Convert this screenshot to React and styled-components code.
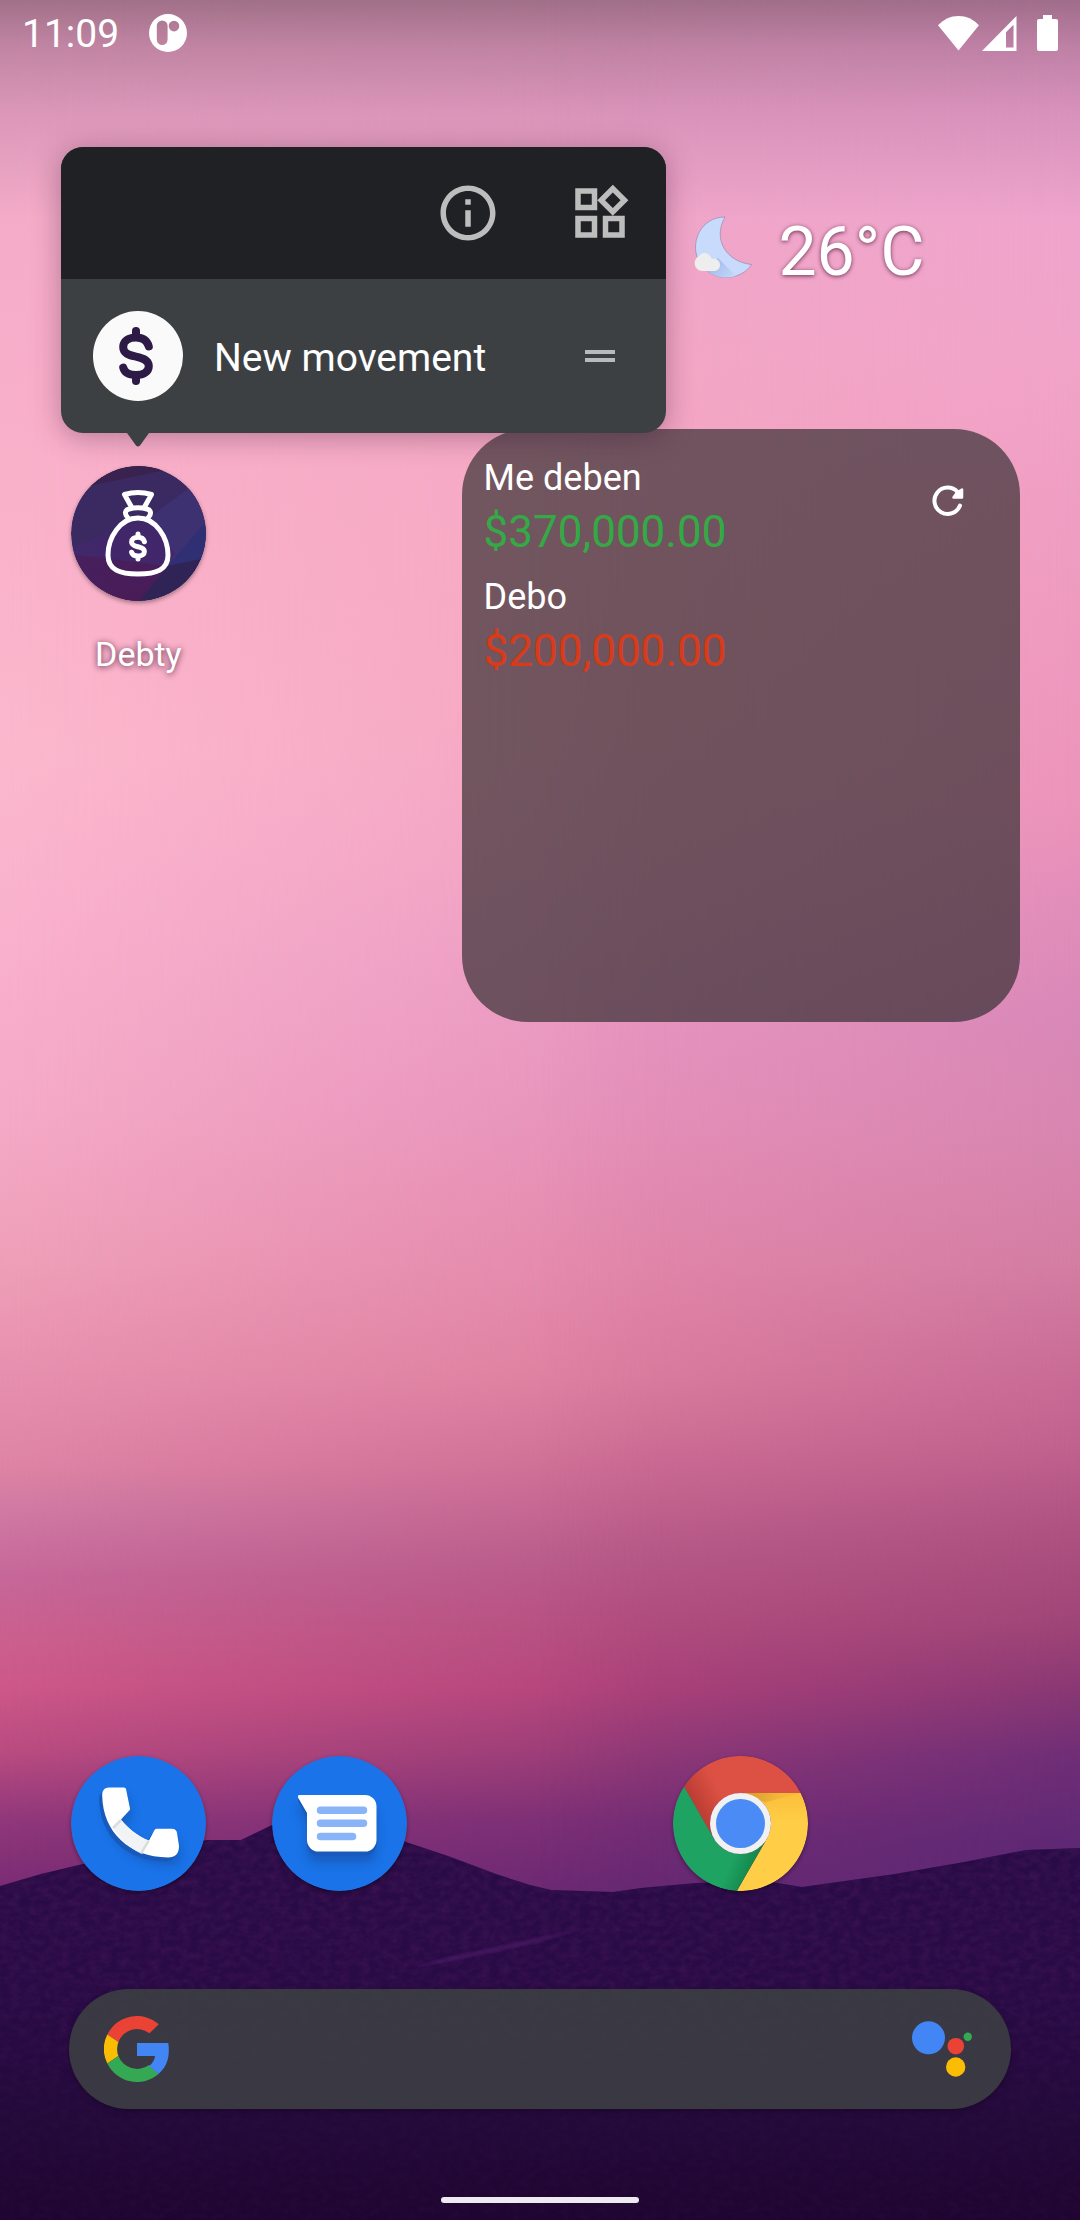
import React from "react";
import styled, { createGlobalStyle, css } from "styled-components";

const GlobalStyle = createGlobalStyle`
  *, *::before, *::after { box-sizing: border-box; }
  body {
    margin: 0;
    background: #22083a;
    color: #fff;
    font-family: Roboto, "Noto Sans", sans-serif;
  }
  button, input {
    font: inherit;
    color: inherit;
    background: none;
    border: 0;
    margin: 0;
    padding: 0;
  }
  button { cursor: pointer; }
  svg { display: block; flex: none; }
`;

/* ---------- Layout ---------- */

const Screen = styled.div`
  position: relative;
  isolation: isolate;
  display: flex;
  flex-direction: column;
  min-height: 100vh;
  overflow: hidden;
`;

const fill = css`
  position: absolute;
  inset: 0;
  width: 100%;
  height: 100%;
`;

const Wallpaper = styled.div`
  ${fill}
  z-index: -1;
  background: linear-gradient(
    180deg,
    #eda4c8 0%, #f0a6c9 9%, #f4a8c5 16%, #f7a7c2 25%, #f6a5c1 32%, #f2a1c2 38%, #ea99c2 44%,
    #e691bb 50%, #e487ab 57%, #dd7f9f 62%, #cd6c94 66%, #b85b89 70%, #b44f80 73%,
    #b2437b 76%, #973b77 79%, #7a2e75 82%, #6a2973 85%, #622673 100%
  );
`;

const SideTint = styled.div`
  ${fill}
  background: ${(p) => p.$colors};
  mask-image: linear-gradient(${(p) => p.$toward}, #000 0%, transparent ${(p) => p.$reach});
`;

const Scrim = styled.div`
  ${fill}
  background: linear-gradient(
    180deg,
    rgba(0, 0, 0, 0.32) 0, rgba(30, 10, 30, 0.22) 46px,
    rgba(60, 20, 70, 0.12) 110px, transparent 220px
  );
`;

const Hills = styled.svg`
  ${fill}
`;

const StatusBar = styled.header`
  display: flex;
  align-items: center;
  height: 66px;
  padding: 0 22px;
`;

const Clock = styled.time`
  padding-top: 2px;
  font-size: 39px;
  line-height: 46px;
`;

const StatusIcons = styled.div`
  display: flex;
  align-items: center;
  gap: ${(p) => p.$gap}px;
  margin-left: ${(p) => p.$push};
`;

const Columns = styled.div`
  display: grid;
  grid-template-columns: repeat(5, 1fr);
  padding: 0 38px;
`;

const WeatherRow = styled(Columns)`
  height: 363px;
  align-items: center;
`;

const Weather = styled.button`
  grid-column: 4 / 6;
  display: flex;
  align-items: center;
  gap: 24px;
  padding-left: 54px;
  font-size: 68px;
  text-shadow: 0 1px 4px rgba(60, 10, 40, 0.75);
`;

const Temperature = styled.span`
  padding-top: 8px;
  line-height: 78px;
`;

/* ---------- Launcher icons ---------- */

const AppCell = styled.div`
  position: relative;
  grid-column: ${(p) => p.$column};
  display: flex;
  flex-direction: column;
  align-items: center;
`;

const AppButton = styled.button`
  display: flex;
  flex-direction: column;
  align-items: center;
  gap: 33px;
  font-size: 34px;
  line-height: 40px;
  text-shadow: 0 1px 6px rgba(60, 10, 40, 0.85);

  svg {
    border-radius: 50%;
    box-shadow: 0 2px 4px rgba(0, 0, 0, 0.35);
  }
`;

const Workspace = styled(Columns)`
  align-items: start;

  ${AppCell} { padding-top: 37px; }
`;

/* ---------- Shortcut menu ---------- */

const Menu = styled.div`
  position: absolute;
  z-index: 2;
  left: 23px;
  bottom: calc(100% - 4px);
  width: 605px;
  border-radius: 22px;
  background: #3d4043;
  box-shadow: 0 4px 28px rgba(60, 20, 50, 0.35);
`;

const MenuHeader = styled.div`
  display: flex;
  justify-content: flex-end;
  border-radius: 22px 22px 0 0;
  background: #202124;
`;

const MenuAction = styled.button`
  display: grid;
  place-items: center;
  width: 132px;
  height: 132px;
  color: #bdbdbd;
`;

const MenuItem = styled.button`
  display: flex;
  align-items: center;
  gap: 31px;
  width: 100%;
  height: 154px;
  padding: 0 51px 0 32px;
  font-size: 39px;
  text-align: left;
`;

const MenuText = styled.span`
  flex: 1;
  padding-top: 4px;
  line-height: 46px;
`;

const DragHandle = styled.span`
  width: 30px;
  height: 12px;
  border: solid #b8bbbd;
  border-width: 4px 0;
`;

const MenuArrow = styled.svg`
  position: absolute;
  top: 100%;
  left: 66px;
`;

/* ---------- Balance widget ---------- */

const Widget = styled.section`
  grid-column: 3 / 6;
  display: flex;
  justify-content: space-between;
  align-items: flex-start;
  min-height: 593px;
  margin: 0 22px;
  padding: 27px 22px;
  border-radius: 66px;
  background: rgba(38, 38, 38, 0.64);
`;

const Balances = styled.dl`
  display: flex;
  flex-direction: column;
  gap: 15px;
  margin: 0;
`;

const BalanceLabel = styled.dt`
  margin-bottom: 4px;
  font-size: 36px;
  line-height: 44px;
`;

const BalanceAmount = styled.dd`
  margin: 0;
  font-size: 44px;
  line-height: 56px;
  color: ${(p) => p.$color};
`;

const RefreshButton = styled.button`
  display: grid;
  place-items: center;
  width: 100px;
  height: 90px;
`;

/* ---------- Dock ---------- */

const Dock = styled(Columns)`
  margin-top: auto;
  padding-bottom: 98px;
`;

const SearchBar = styled.form`
  display: flex;
  align-items: center;
  height: 120px;
  margin: 0 69px;
  padding: 0 39px 0 35px;
  border-radius: 60px;
  background: rgba(60, 62, 67, 0.92);
  box-shadow: 0 2px 6px rgba(0, 0, 0, 0.3);
`;

const SearchInput = styled.input`
  flex: 1;
  min-width: 0;
  height: 100%;
  padding: 0 32px;
  font-size: 39px;
  outline: none;
`;

const NavBar = styled.footer`
  display: flex;
  justify-content: center;
  align-items: flex-end;
  height: 111px;
  padding-bottom: 17px;
`;

const HomePill = styled.button`
  width: 198px;
  height: 6px;
  border-radius: 3px;
  background: #edebef;
`;

/* ---------- Drawings ---------- */

const DOLLAR =
  "M12.8-9.5C11.2-15.5 7-18.5 0-18.5C-8-18.5-12.8-14.5-12.8-9C-12.8-2 -6-.8 0 .6C7 2.2 12.8 4 12.8 10C12.8 15.5 8 19 0 19C-6.5 19-11.5 16.5-12.8 11.5M0-25V-18.5M0 19V25";

const DebugIcon = () => (
  <svg width="38" height="38" viewBox="0 0 38 38" fill="#fff" fillRule="evenodd">
    <path d="M19 0a19 19 0 1 1 0 38a19 19 0 1 1 0-38zM13.2 6.4a5.4 5.4 0 0 0-5.4 5.4v13.8a5.4 5.4 0 0 0 10.8 0V11.8a5.4 5.4 0 0 0-5.4-5.4zM25 6.8a5.3 5.3 0 1 0 0 10.6a5.3 5.3 0 1 0 0-10.6z" />
  </svg>
);

const WifiIcon = () => (
  <svg width="41" height="35" viewBox="0 0 41 35" fill="#fff">
    <path d="M20.5 34.5L0 9.3C5.8 3.2 12.8 0 20.5 0S35.2 3.2 41 9.3z" />
  </svg>
);

const SignalIcon = () => (
  <svg width="35" height="35" viewBox="0 0 35 35" fill="#fff" fillRule="evenodd">
    <path d="M34.5 0V35H0zM31.5 8.7L24 16.2V31.5H31.5z" />
  </svg>
);

const BatteryIcon = () => (
  <svg width="21" height="36" viewBox="0 0 21 36" fill="#fff">
    <path d="M6 0h9v4h4a2 2 0 0 1 2 2v28a2 2 0 0 1-2 2H2a2 2 0 0 1-2-2V6a2 2 0 0 1 2-2h4z" />
  </svg>
);

const MOON = "M31 1C14 1 2 14 1.5 31C1.5 48 15 61.5 32 61.5C43 61.5 53 56 57.5 48.5C33 46 18 24 31 1z";

const MoonIcon = () => (
  <svg width="60" height="63" viewBox="0 0 60 63">
    <defs>
      <linearGradient id="moonShade" x1="26" y1="44" x2="44" y2="60" gradientUnits="userSpaceOnUse">
        <stop offset="0" stopColor="#a9bfec" />
        <stop offset="1" stopColor="#c6dafc" />
      </linearGradient>
      <clipPath id="moonClip">
        <path d={MOON} />
      </clipPath>
    </defs>
    <path d={MOON} fill="#c8dbfd" stroke="#8c7fa6" strokeWidth=".6" />
    <path clipPath="url(#moonClip)" d="M24 42L44 62H20L8 54z" fill="url(#moonShade)" />
    <path
      d="M8.5 55C3.5 55 .7 51 .7 47.3C.7 43.5 3 41 5 40.3C6.5 38 8 37 10.5 37C14 37 16.5 39.5 17.8 43C22.5 42 26 45 26 49C26 52.5 23.5 55 20 55z"
      fill="#eee"
    />
  </svg>
);

const InfoIcon = () => (
  <svg width="66" height="66" viewBox="0 0 24 24" fill="currentColor">
    <path d="M11 7h2v2h-2zm0 4h2v6h-2zm1-9C6.48 2 2 6.48 2 12s4.48 10 10 10 10-4.48 10-10S17.52 2 12 2zm0 18c-4.41 0-8-3.59-8-8s3.59-8 8-8 8 3.59 8 8-3.59 8-8 8z" />
  </svg>
);

const WidgetsIcon = () => (
  <svg width="66" height="66" viewBox="0 0 24 24" fill="currentColor">
    <path d="M16.66 4.52l2.83 2.83-2.83 2.83-2.83-2.83 2.83-2.83M9 5v4H5V5h4m10 10v4h-4v-4h4M9 15v4H5v-4h4m7.66-13.31L11 7.34 16.66 13l5.66-5.66-5.66-5.65zM11 3H3v8h8V3zm10 10h-8v8h8v-8zm-10 0H3v8h8v-8z" />
  </svg>
);

const MovementIcon = () => (
  <svg width="90" height="90" viewBox="0 0 90 90">
    <circle cx="45" cy="45" r="45" fill="#fafafa" />
    <path
      transform="translate(43 45)"
      d={DOLLAR}
      fill="none"
      stroke="#2e1a47"
      strokeWidth="8"
      strokeLinecap="round"
    />
  </svg>
);

const DebtyIcon = () => (
  <svg width="135" height="135" viewBox="0 0 135 135">
    <defs>
      <clipPath id="debtyClip">
        <circle cx="67.5" cy="67.5" r="67.5" />
      </clipPath>
      <linearGradient id="debtyWine" x1="0" y1="0" x2="1" y2="1">
        <stop offset="0" stopColor="#46205f" />
        <stop offset="1" stopColor="#4a1b55" />
      </linearGradient>
      <linearGradient id="debtyPlum" x1="0" y1="0" x2="1" y2="0">
        <stop offset="0" stopColor="#40286a" />
        <stop offset="1" stopColor="#43266b" />
      </linearGradient>
    </defs>
    <g clipPath="url(#debtyClip)">
      <rect width="135" height="135" fill="#3b2a61" />
      <path d="M0 0H135L90 5L18 20L0 26z" fill="#39234e" />
      <path d="M118 22L135 10V94L97 100L60 78L78 52z" fill="#3e3172" />
      <path d="M135 55L97 100L135 94z" fill="#302f74" />
      <path d="M0 82L80 50L104 88L70 135H0z" fill="url(#debtyPlum)" />
      <path d="M0 88L97 100L68 135H0z" fill="url(#debtyWine)" />
      <path d="M97 100L135 92V135H68z" fill="#2f2455" />
    </g>
    <g fill="none" stroke="#fff" strokeWidth="5" strokeLinecap="round" strokeLinejoin="round">
      <path d="M60.5 41L53.5 28.5Q67 24.5 80.5 28.5L73.5 41" />
      <path d="M57 52C53 48 54 44 58 43Q67 40.5 76 43C80 44 81 48 77 52" />
      <path d="M67 52C49 52 37 72 37 89C37 104 49 108 67 108S97 104 97 89C97 72 85 52 67 52z" />
      <path transform="translate(67 80.5) scale(.5)" strokeWidth="10" d={DOLLAR} />
    </g>
  </svg>
);

const RefreshIcon = () => (
  <svg width="32" height="32" viewBox="0 0 32 32">
    <path
      d="M28 20.5A13.2 13.2 0 1 1 25.5 7"
      fill="none"
      stroke="#fff"
      strokeWidth="4"
      strokeLinecap="round"
    />
    <path
      d="M30 4.5V12.5H21.5L25 7.5z"
      fill="#fff"
      stroke="#fff"
      strokeWidth="2.5"
      strokeLinejoin="round"
    />
  </svg>
);

const PHONE =
  "M31.2 40C31 35 33 31.5 38 31.5H53Q54.6 31.5 55 33L59 52.5Q59.2 53.5 58.5 54.3L50 63.5C57 72 66 80 78 84.5L83.5 74Q84.2 72.8 86 72.8H101Q105.5 73 106 77L108 90C108 98 104 101.5 97 101.5C58 101 32 76 31.2 40z";

const PhoneIcon = () => (
  <svg width="135" height="135" viewBox="0 0 135 135">
    <defs>
      <filter id="softPhone" x="-30%" y="-30%" width="160%" height="160%">
        <feGaussianBlur stdDeviation="4" />
      </filter>
    </defs>
    <circle cx="67.5" cy="67.5" r="67.5" fill="#1a73e8" />
    <path d={PHONE} transform="translate(2 8)" fill="#174ea6" opacity=".5" filter="url(#softPhone)" />
    <path d={PHONE} transform="translate(-3 4)" fill="#185abc" />
    <path d={PHONE} fill="#fff" />
    <path d="M42 72L50 64C57 72 66 80 78 85L70 97.5C58 92 49 83 42 72z" fill="#f1f3f4" />
    <path d="M42 72L50 64M70 97.5L77.5 85" stroke="#dadce0" strokeWidth="2.5" />
  </svg>
);

const BUBBLE =
  "M27 39H93A11.5 11.5 0 0 1 104.5 50.5V84A11.5 11.5 0 0 1 93 95.5H46.5A11.5 11.5 0 0 1 35 84V57L26 41.5Q25.5 39 27 39z";

const MessagesIcon = () => (
  <svg width="135" height="135" viewBox="0 0 135 135">
    <defs>
      <filter id="softBubble" x="-30%" y="-30%" width="160%" height="160%">
        <feGaussianBlur stdDeviation="5" />
      </filter>
    </defs>
    <circle cx="67.5" cy="67.5" r="67.5" fill="#1a73e8" />
    <path d={BUBBLE} transform="translate(0 11)" fill="#174ea6" opacity=".6" filter="url(#softBubble)" />
    <path d={BUBBLE} transform="translate(0 4)" fill="#185abc" />
    <path d={BUBBLE} fill="#fff" />
    <path d="M48.5 54.3H91.5M48.5 67.3H91.5M48.5 80.5H80.5" stroke="#8ab4f8" strokeWidth="7.5" strokeLinecap="round" />
  </svg>
);

const ChromeIcon = () => (
  <svg width="135" height="135" viewBox="0 0 135 135">
    <defs>
      <linearGradient id="chRed" x1="22" y1="60" x2="52" y2="44" gradientUnits="userSpaceOnUse">
        <stop offset="0" stopColor="#b63a30" />
        <stop offset="1" stopColor="#dd5144" />
      </linearGradient>
      <linearGradient id="chYellow" x1="0" y1="37" x2="0" y2="66" gradientUnits="userSpaceOnUse">
        <stop offset="0" stopColor="#fbbf3a" />
        <stop offset="1" stopColor="#ffcd46" />
      </linearGradient>
      <linearGradient id="chGreen" x1="84" y1="106" x2="62" y2="97" gradientUnits="userSpaceOnUse">
        <stop offset="0" stopColor="#138549" />
        <stop offset="1" stopColor="#1ea362" />
      </linearGradient>
      <linearGradient id="chGold" x1="78" y1="36" x2="104" y2="50" gradientUnits="userSpaceOnUse">
        <stop offset="0" stopColor="#d99e2f" />
        <stop offset="1" stopColor="#f4b93a" />
      </linearGradient>
    </defs>
    <path d="M10.9 30.6A67.5 67.5 0 0 1 127.7 37H67.5A30.5 30.5 0 0 0 41 82.7z" fill="url(#chRed)" />
    <path d="M127.7 37A67.5 67.5 0 0 1 63.8 134.9L93.9 82.7A30.5 30.5 0 0 0 67.5 37z" fill="url(#chYellow)" />
    <path d="M63.8 134.9A67.5 67.5 0 0 1 10.9 30.6L41 82.7A30.5 30.5 0 0 0 93.9 82.7z" fill="url(#chGreen)" />
    <path d="M70 37H127.7L92 46.5z" fill="url(#chGold)" />
    <circle cx="67.5" cy="67.5" r="30.5" fill="#f1f1f1" />
    <circle cx="67.5" cy="67.5" r="24.5" fill="#4b8bf5" />
  </svg>
);

const GoogleIcon = () => (
  <svg width="66" height="66" viewBox="-33 -33 66 66">
    <path d="M21.8-24.7A33 33 0 0 0 -29.7-14.5L-18.6-7A20 20 0 0 1 12.5-15.7z" fill="#ea4335" />
    <path d="M-29.7-14.5A33 33 0 0 0 -29.7 14.5L-18.6 7A20 20 0 0 1 -18.6-7z" fill="#fbbc04" />
    <path d="M-29.7 14.5A33 33 0 0 0 21.5 25L12 16A20 20 0 0 1 -18.6 7z" fill="#34a853" />
    <path d="M0-6H31.3C33 6 31 17 21.5 25L12 17C15.5 14.5 17.5 11 18 7H0z" fill="#4285f4" />
  </svg>
);

const AssistantIcon = () => (
  <svg width="60" height="56" viewBox="0 0 60 56">
    <circle cx="16.5" cy="16.8" r="16.5" fill="#4285f4" />
    <circle cx="43.8" cy="25.2" r="8.3" fill="#ea4335" />
    <circle cx="55.8" cy="15.7" r="4.2" fill="#34a853" />
    <circle cx="43.7" cy="46" r="9.7" fill="#fbbc04" />
  </svg>
);

const HILL_LINE =
  "M0 1886L41 1874L83 1864L150 1850L207 1840L241 1840L272 1825L303 1814L340 1819L406 1842L448 1856L496 1874L530 1885L551 1890L613 1892L641 1888L696 1883L765 1881L802 1887L895 1874L964 1862L1026 1850L1080 1848V2220H0z";

const HillsDrawing = () => (
  <Hills viewBox="0 0 1080 2220" preserveAspectRatio="none" aria-hidden="true">
    <defs>
      <linearGradient id="hillFill" x1="0" y1="1820" x2="0" y2="2220" gradientUnits="userSpaceOnUse">
        <stop offset="0" stopColor="#290b48" />
        <stop offset=".45" stopColor="#280a45" />
        <stop offset=".75" stopColor="#230a3a" />
        <stop offset="1" stopColor="#1f0530" />
      </linearGradient>
      <linearGradient id="grainFade" x1="0" y1="1820" x2="0" y2="2220" gradientUnits="userSpaceOnUse">
        <stop offset="0" stopColor="#fff" />
        <stop offset=".4" stopColor="#ccc" />
        <stop offset=".75" stopColor="#333" />
      </linearGradient>
      <mask id="grainMask">
        <path d={HILL_LINE} fill="url(#grainFade)" />
      </mask>
      <filter id="grain" x="0" y="0" width="100%" height="100%" colorInterpolationFilters="sRGB">
        <feTurbulence type="fractalNoise" baseFrequency=".1 .15" numOctaves="3" seed="4" />
        <feColorMatrix values="0 0 0 0 .24  0 0 0 0 .08  0 0 0 0 .32  1.6 0 0 0 -.5" />
      </filter>
      <filter id="ridgeBlur">
        <feGaussianBlur stdDeviation="1.5" />
      </filter>
    </defs>
    <path d={HILL_LINE} fill="url(#hillFill)" />
    <g mask="url(#grainMask)">
      <rect y="1800" width="1080" height="420" filter="url(#grain)" />
    </g>
    <path d="M410 1968L450 1957L520 1942L590 1927L530 1944L455 1960z" fill="#4c1a66" opacity=".8" filter="url(#ridgeBlur)" />
  </Hills>
);

const LEFT_SKY = `linear-gradient(180deg,
  #eda6c8 0%, #f3abc8 9%, #f8afc9 18%, #fab4cb 28%, #fbb8cd 34%, #f9b1cc 42%,
  #f5aac6 50%, #ee9fb8 57%, #e78fae 62%, #de84a4 66%, #d07aa3 68%, #c66799 71%,
  #cb5f8d 74%, #cd5888 76%, #b84b80 79%, #90377a 82%, #7b2c74 85%, #702773 100%)`;

const RIGHT_SKY = `linear-gradient(180deg,
  #eaa0cb 0%, #eea4cc 9%, #f1a3c8 16%, #ee9bbf 27%, #ec94ba 36%, #e18dba 41%,
  #d888b7 46%, #d886b0 51%, #d37da2 57%, #ca6e98 61%, #c0628e 65%, #ad5181 69%,
  #a04577 73%, #8a3874 76%, #6f2e76 79%, #5e2874 83%, #5a2570 100%)`;

const accounts = [
  { label: "Me deben", amount: "$370,000.00", color: "#34a945" },
  { label: "Debo", amount: "$200,000.00", color: "#d93a18" },
];

const dockApps = [
  { name: "Phone", column: 1, Icon: PhoneIcon },
  { name: "Messages", column: 2, Icon: MessagesIcon },
  { name: "Chrome", column: 4, Icon: ChromeIcon },
];

const ShortcutMenu = () => (
  <Menu>
    <MenuHeader>
      <MenuAction type="button" aria-label="App info"><InfoIcon /></MenuAction>
      <MenuAction type="button" aria-label="Widgets"><WidgetsIcon /></MenuAction>
    </MenuHeader>
    <MenuItem type="button">
      <MovementIcon />
      <MenuText>New movement</MenuText>
      <DragHandle />
    </MenuItem>
    <MenuArrow width="22" height="14" viewBox="0 0 22 14" aria-hidden="true">
      <path d="M0 0H22L13 12.5Q11 14.5 9 12.5z" fill="#3d4043" />
    </MenuArrow>
  </Menu>
);

const BalanceWidget = () => (
  <Widget>
    <Balances>
      {accounts.map(({ label, amount, color }) => (
        <div key={label}>
          <BalanceLabel>{label}</BalanceLabel>
          <BalanceAmount $color={color}>{amount}</BalanceAmount>
        </div>
      ))}
    </Balances>
    <RefreshButton type="button" aria-label="Refresh"><RefreshIcon /></RefreshButton>
  </Widget>
);

export default function App() {
  return (
    <>
      <GlobalStyle />
      <Screen>
        <Wallpaper>
          <SideTint $toward="90deg" $reach="62%" $colors={LEFT_SKY} />
          <SideTint $toward="270deg" $reach="50%" $colors={RIGHT_SKY} />
          <Scrim />
          <HillsDrawing />
        </Wallpaper>

        <StatusBar>
          <Clock>11:09</Clock>
          <StatusIcons $gap={0} $push="30px"><DebugIcon /></StatusIcons>
          <StatusIcons $gap={20} $push="auto">
            <StatusIcons $gap={3} $push="0">
              <WifiIcon />
              <SignalIcon />
            </StatusIcons>
            <BatteryIcon />
          </StatusIcons>
        </StatusBar>

        <WeatherRow>
          <Weather type="button">
            <MoonIcon />
            <Temperature>26°C</Temperature>
          </Weather>
        </WeatherRow>

        <Workspace>
          <AppCell $column={1}>
            <ShortcutMenu />
            <AppButton type="button">
              <DebtyIcon />
              <span>Debty</span>
            </AppButton>
          </AppCell>
          <BalanceWidget />
        </Workspace>

        <Dock>
          {dockApps.map(({ name, column, Icon }) => (
            <AppCell key={name} $column={column}>
              <AppButton type="button" aria-label={name}><Icon /></AppButton>
            </AppCell>
          ))}
        </Dock>

        <SearchBar role="search">
          <GoogleIcon />
          <SearchInput type="search" aria-label="Search" />
          <button type="button" aria-label="Assistant"><AssistantIcon /></button>
        </SearchBar>

        <NavBar>
          <HomePill type="button" aria-label="Home" />
        </NavBar>
      </Screen>
    </>
  );
}
